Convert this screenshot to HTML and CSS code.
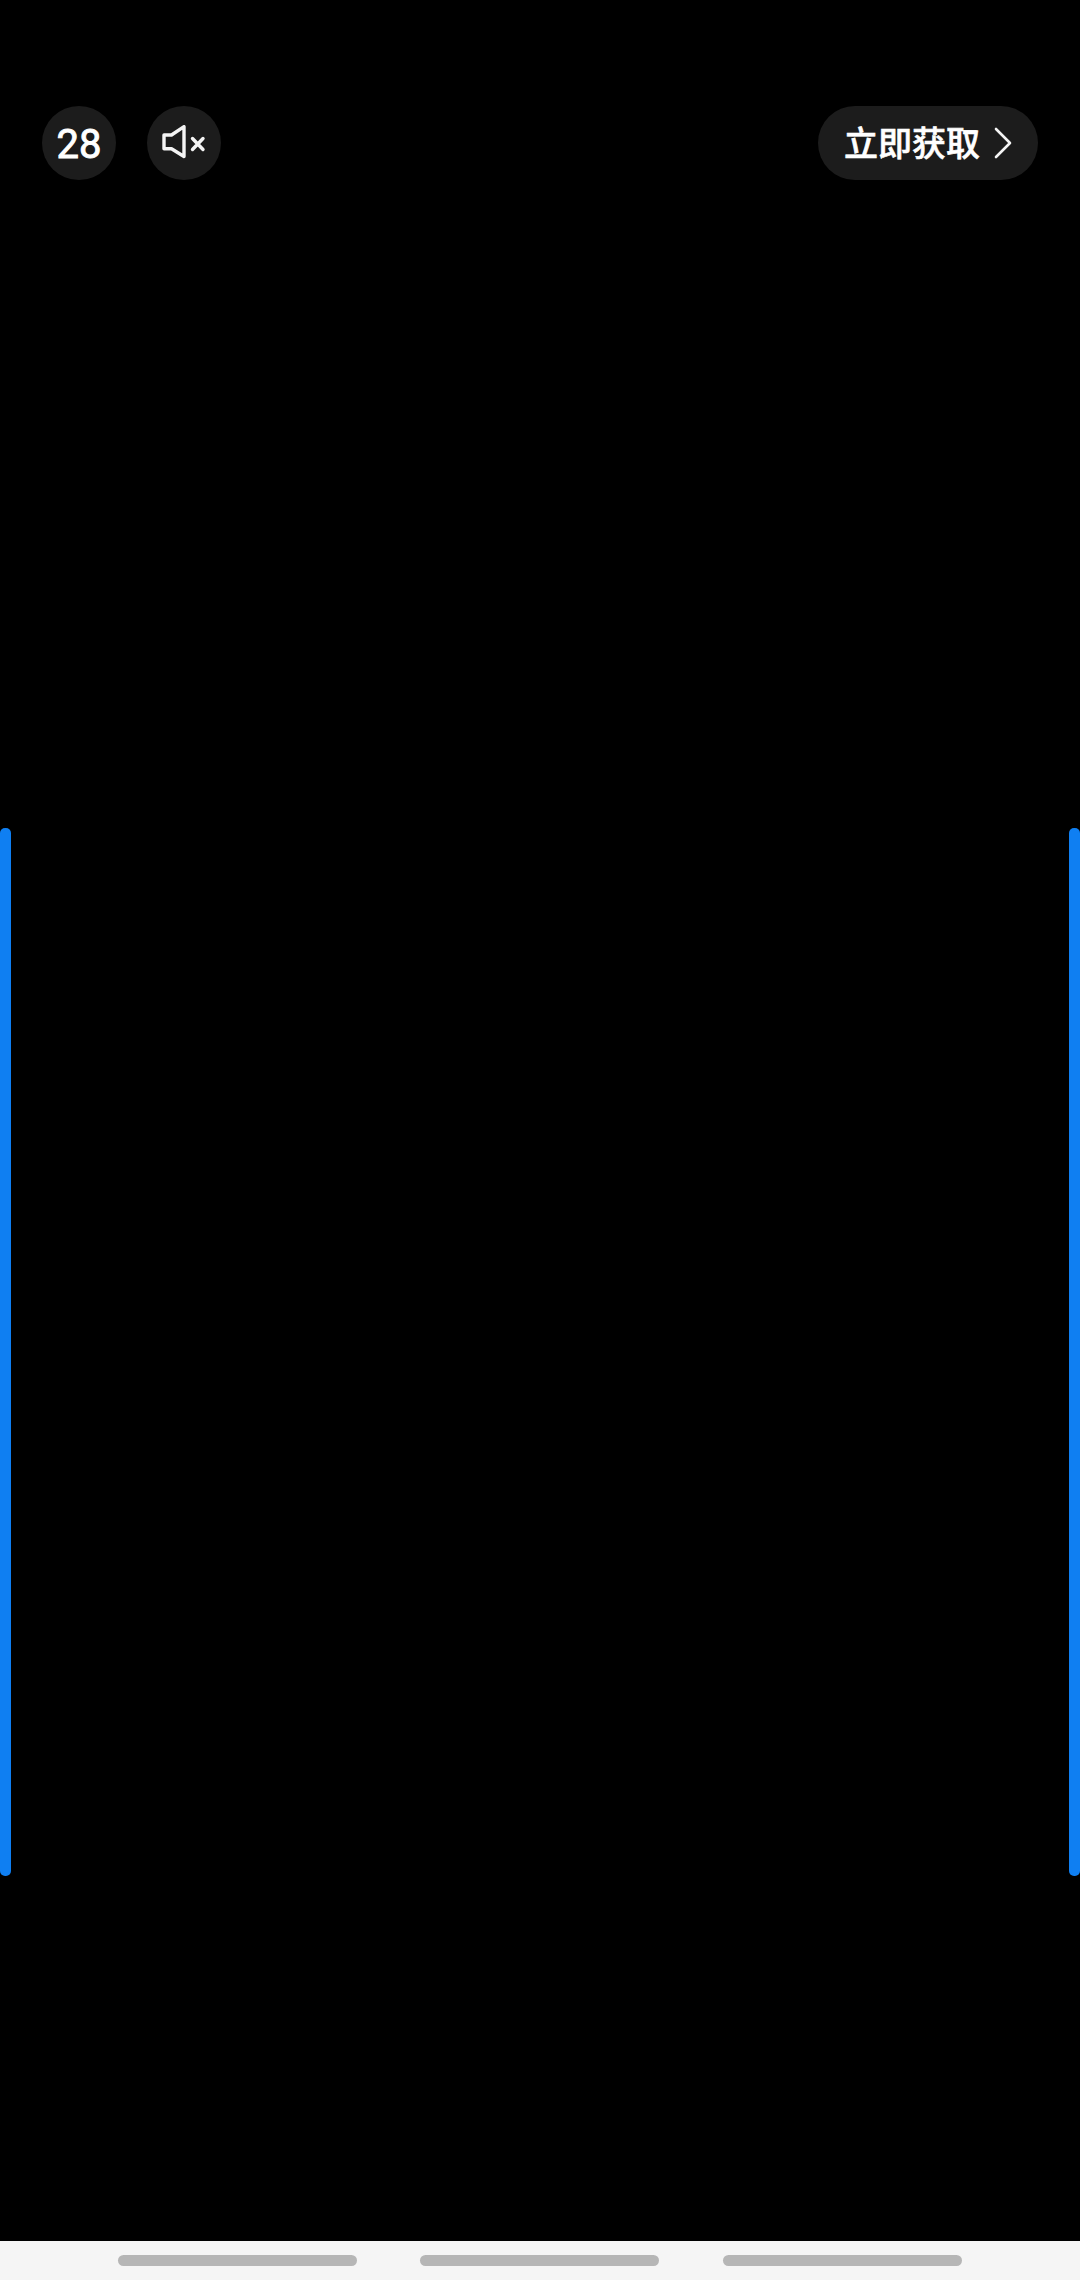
FILE: index.html
```html
<!DOCTYPE html>
<html lang="zh-CN">
<head>
<meta charset="utf-8">
<title>广告</title>
<link rel="stylesheet" href="styles.css">
</head>
<body>
<div class="screen">
  <header class="top">
    <div class="top-left">
      <div class="chip count">28</div>
      <div class="chip">
        <svg class="mute" viewBox="0 0 44 36" width="44" height="36" fill="none" stroke="#f4f4f4" stroke-linejoin="round" stroke-linecap="round">
          <path d="M2 10 H9.5 L22 1.7 V31.5 L9.5 23.7 H2 Z" stroke-width="3.4"/>
          <path d="M30.5 13.5 L41 24.5 M41 13.5 L30.5 24.5" stroke-width="3.4"/>
        </svg>
      </div>
    </div>
    <div class="cta">
      <span class="cta-text">立即获取</span>
      <svg viewBox="0 0 18 32" width="18" height="32" fill="none" stroke="#f4f4f4" stroke-width="2.6" stroke-linecap="round" stroke-linejoin="round">
        <path d="M2 2 L16 16 L2 30"/>
      </svg>
    </div>
  </header>
  <main class="stage">
    <div class="edge"></div>
    <div class="edge"></div>
  </main>
  <footer class="nav">
    <div class="handle"></div>
    <div class="handle"></div>
    <div class="handle"></div>
  </footer>
</div>
</body>
</html>
```
FILE: styles.css
```css
* { box-sizing: border-box; }
html, body { margin: 0; padding: 0; background: #000; }
.screen {
  width: 1080px;
  height: 2280px;
  display: flex;
  flex-direction: column;
  background: #000;
  font-family: "Noto Sans CJK SC", "Roboto", sans-serif;
  color: #fff;
  overflow: hidden;
}
.top {
  display: flex;
  justify-content: space-between;
  padding: 106px 42px 0 42px;
}
.top-left { display: flex; gap: 31px; }
.chip {
  width: 74px;
  height: 74px;
  border-radius: 50%;
  background: #1c1c1c;
  display: flex;
  align-items: center;
  justify-content: center;
}
.count {
  font-family: "Roboto", sans-serif;
  font-size: 40px;
  font-weight: 400;
  padding-top: 2px;
  -webkit-text-stroke: 0.9px #fff;
}
.cta {
  width: 220px;
  height: 74px;
  border-radius: 37px;
  background: #1c1c1c;
  display: flex;
  align-items: center;
  padding-left: 26px;
  gap: 14px;
}
.cta-text {
  font-size: 34px;
  font-weight: 500;
  line-height: 74px;
  white-space: nowrap;
  transform: translateY(-1px);
  -webkit-text-stroke: 0.6px #fff;
}
.stage {
  flex: 1;
  display: flex;
  justify-content: space-between;
  padding: 648px 0 365px;
}
.edge {
  width: 11px;
  border-radius: 5px;
  background: #0f7ff2;
}
.nav {
  height: 39px;
  background: #f5f5f5;
  display: flex;
  gap: 63.4px;
  padding: 14px 0 0 118px;
}
.handle {
  width: 239px;
  height: 11px;
  border-radius: 6px;
  background: #b6b6b6;
}
```
